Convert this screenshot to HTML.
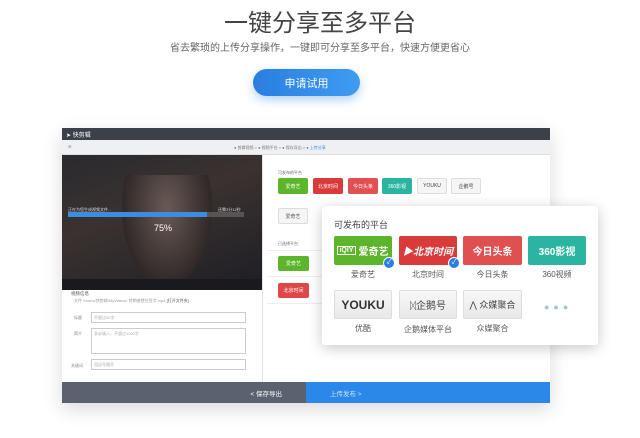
<!DOCTYPE html>
<html><head><meta charset="utf-8"><style>
*{margin:0;padding:0;box-sizing:border-box}
body{width:640px;height:438px;background:#fff;font-family:"Liberation Sans","Noto Sans CJK SC",sans-serif;position:relative;overflow:hidden}
.a{position:absolute}
.t{font-size:5px;color:#fff;display:flex;align-items:center;justify-content:center;border-radius:2px;white-space:nowrap;overflow:hidden}
.T{font-size:10px;color:#fff;display:flex;align-items:center;justify-content:center;border-radius:2px;font-weight:bold;white-space:nowrap;overflow:hidden}
.L{font-size:8px;color:#555;text-align:center}
.in{border:1px solid #ccc;background:#fff;font-size:4px;color:#aaa;padding:2px}
</style></head><body>
<div class="a" style="left:0;top:3px;width:640px;text-align:center;font-size:24px;color:#444">一键分享至多平台</div>
<div class="a" style="left:0;top:39px;width:640px;text-align:center;font-size:10px;color:#666">省去繁琐的上传分享操作，一键即可分享至多平台，快速方便更省心</div>
<div class="a" style="left:253px;top:69px;width:107px;height:27px;border-radius:14px;background:linear-gradient(90deg,#2a7ee0,#3f9cf0);box-shadow:0 4px 10px rgba(40,130,230,.35);color:#fff;font-size:11px;display:flex;align-items:center;justify-content:center">申请试用</div>

<div class="a" style="left:62px;top:128px;width:488px;height:275px;background:#fff;box-shadow:0 6px 18px rgba(0,0,0,.15)">
 <div class="a" style="left:0;top:0;width:488px;height:12px;background:#3b4049;color:#fff;font-size:6px;padding:2px 4px">➤ 快剪辑</div>
 <div class="a" style="left:0;top:12px;width:488px;height:15px;background:#eef0f3;border-bottom:1px solid #ddd;font-size:4px;color:#777;padding:4px 6px">☰<span style="position:absolute;left:172px;top:5px">● 剪辑视频 &gt; ● 视频平台 &gt; ● 保存导出 &gt; <span style="color:#2a8ae8">● 上传分享</span></span></div>
 <div class="a" style="left:0;top:27px;width:200px;height:135px;background:linear-gradient(160deg,#2a2a2f,#3a3230 40%,#1e1e24);overflow:hidden">
  <div class="a" style="left:60px;top:20px;width:90px;height:110px;background:radial-gradient(ellipse at 50% 30%,#6a5a55,#302828 70%,transparent 72%)"></div>
  <div class="a" style="left:6px;top:52px;font-size:4px;color:#ddd">正在为您生成视频文件...</div>
  <div class="a" style="left:156px;top:52px;font-size:4px;color:#ddd">还需3分12秒</div>
  <div class="a" style="left:6px;top:57px;width:176px;height:5px;background:#555"><div style="width:139px;height:5px;background:#3a8de0"></div></div>
  <div class="a" style="left:92px;top:68px;font-size:9px;color:#fff">75%</div>
  <div class="a" style="left:0;top:124px;width:200px;height:11px;background:#1a1a1e"></div>
 </div>
 <div class="a" style="left:200px;top:27px;width:1px;height:227px;background:#e2e2e2"></div>
 <div class="a" style="left:9px;top:163px;font-size:4.5px;color:#555">视频信息</div>
 <div class="a" style="left:12px;top:170px;font-size:4px;color:#999">文件 /Users/快剪辑/MyVideos/ 特朗普就任签字.mp4 <span style="color:#555">[打开文件夹]</span></div>
 <div class="a" style="left:12px;top:187px;font-size:4px;color:#888">标题</div>
 <div class="a in" style="left:29px;top:184px;width:155px;height:11px">不超过50字</div>
 <div class="a" style="left:12px;top:203px;font-size:4px;color:#888">简介</div>
 <div class="a in" style="left:29px;top:200px;width:155px;height:26px">非必填入，不超过1000字</div>
 <div class="a" style="left:9px;top:235px;font-size:4px;color:#888">关键词</div>
 <div class="a in" style="left:29px;top:231px;width:155px;height:11px">用逗号隔开</div>
 <div class="a" style="left:0;top:254px;width:244px;height:21px;background:#5a6270;color:#fff;font-size:6.5px;display:flex;align-items:center;justify-content:flex-end;padding-right:24px">&lt; 保存导出</div>
 <div class="a" style="left:244px;top:254px;width:244px;height:21px;background:#2b88e8;color:#cfe3fa;font-size:6.5px;display:flex;align-items:center;padding-left:24px">上传发布 &gt;</div>
 <div class="a" style="left:216px;top:42px;font-size:4px;color:#666">可发布的平台</div>
 <div class="a t" style="left:216px;top:50px;width:30px;height:16px;background:#5cb52a">爱奇艺</div>
 <div class="a t" style="left:251px;top:50px;width:30px;height:16px;background:#d93a3a">北京时间</div>
 <div class="a t" style="left:286px;top:50px;width:30px;height:16px;background:#e05050">今日头条</div>
 <div class="a t" style="left:320px;top:50px;width:30px;height:16px;background:#2ab5a0">360影视</div>
 <div class="a t" style="left:355px;top:50px;width:30px;height:16px;background:#f5f5f5;border:1px solid #ddd;color:#444">YOUKU</div>
 <div class="a t" style="left:389px;top:50px;width:30px;height:16px;background:#f5f5f5;border:1px solid #ddd;color:#444">企鹅号</div>
 <div class="a t" style="left:216px;top:80px;width:30px;height:16px;background:#f5f5f5;border:1px solid #ddd;color:#555">爱奇艺</div>
 <div class="a" style="left:216px;top:113px;font-size:4px;color:#666">已选择平台</div>
 <div class="a" style="left:205px;top:122px;width:283px;height:1px;background:#eee"></div>
 <div class="a t" style="left:216px;top:128px;width:31px;height:15px;background:#5cb52a">爱奇艺</div>
 <div class="a" style="left:205px;top:148px;width:283px;height:1px;background:#eee"></div>
 <div class="a t" style="left:216px;top:155px;width:31px;height:15px;background:#e04848">北京时间</div>
 <div class="a" style="left:205px;top:175px;width:283px;height:1px;background:#eee"></div>
</div>

<div class="a" style="left:322px;top:206px;width:276px;height:139px;background:#fff;border-radius:3px;box-shadow:0 3px 14px rgba(0,0,0,.22)">
 <div class="a" style="left:12px;top:12px;font-size:9px;color:#444">可发布的平台</div>
 <div class="a T" style="left:12px;top:30px;width:58px;height:29px;background:#5cb52a"><span style="border:1px solid #fff;font-size:7px;padding:0 1px;margin-right:3px">iQIY</span>爱奇艺</div>
 <div class="a T" style="left:77px;top:30px;width:58px;height:29px;background:#d93a3a;font-style:italic">▶北京时间</div>
 <div class="a T" style="left:141px;top:30px;width:59px;height:29px;background:#e05050">今日头条</div>
 <div class="a T" style="left:206px;top:30px;width:58px;height:29px;background:#2ab5a0">360影视</div>
 <div class="a" style="left:61px;top:51px;width:12px;height:12px;border-radius:50%;background:#2a7ee0;border:1.5px solid #fff;color:#fff;font-size:7px;text-align:center;line-height:9px">✓</div>
 <div class="a" style="left:126px;top:51px;width:12px;height:12px;border-radius:50%;background:#2a7ee0;border:1.5px solid #fff;color:#fff;font-size:7px;text-align:center;line-height:9px">✓</div>
 <div class="a L" style="left:12px;top:63px;width:58px">爱奇艺</div>
 <div class="a L" style="left:77px;top:63px;width:58px">北京时间</div>
 <div class="a L" style="left:141px;top:63px;width:59px">今日头条</div>
 <div class="a L" style="left:206px;top:63px;width:58px">360视频</div>
 <div class="a T" style="left:12px;top:84px;width:58px;height:29px;background:linear-gradient(#f8f8f8,#e8e8e8);border:1px solid #ddd;color:#333;font-size:12px">YOUKU</div>
 <div class="a T" style="left:77px;top:84px;width:58px;height:29px;background:linear-gradient(#f8f8f8,#e8e8e8);border:1px solid #ddd;color:#444;font-weight:normal">ᛞ企鹅号</div>
 <div class="a T" style="left:141px;top:84px;width:59px;height:29px;background:linear-gradient(#f8f8f8,#e8e8e8);border:1px solid #ddd;color:#444;font-weight:normal;font-size:9px">⋀ 众媒聚合</div>
 <div class="a" style="left:222px;top:96px;font-size:9px;color:#a8c2dc;letter-spacing:4px">●●●</div>
 <div class="a L" style="left:12px;top:117px;width:58px">优酷</div>
 <div class="a L" style="left:77px;top:118px;width:58px">企鹅媒体平台</div>
 <div class="a L" style="left:141px;top:117px;width:59px">众媒聚合</div>
</div>
</body></html>
